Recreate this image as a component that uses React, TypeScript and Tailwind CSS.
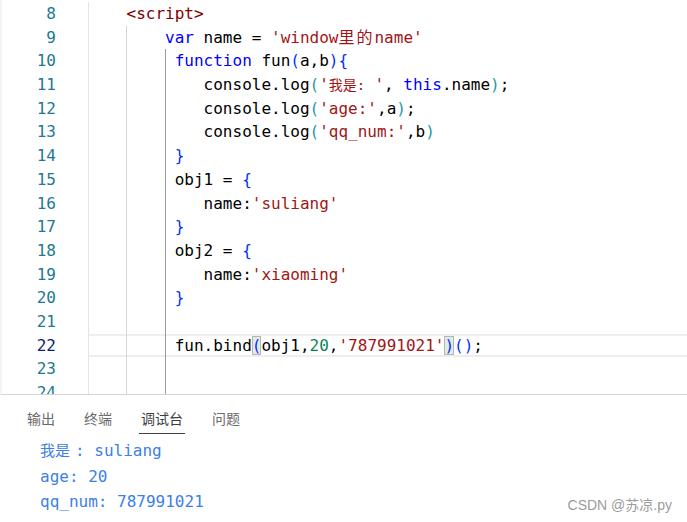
import React from "react";

type Tok = { t: string; c: string; cjk?: "big" | "small"; box?: boolean };

const K = "text-[#0000ff]";
const S = "text-[#a31515]";
const N = "text-[#098658]";
const T = "text-[#800000]";
const D = "text-black";
const B1 = "text-[#0431fa]";
const B2 = "text-[#1f9aa8]";

const tk = (t: string, c: string, extra: Partial<Tok> = {}): Tok => ({ t, c, ...extra });

const LINES: { n: number; indent: number; toks: Tok[] }[] = [
  { n: 8, indent: 4, toks: [tk("<script>", T)] },
  {
    n: 9,
    indent: 8,
    toks: [tk("var", K), tk(" name = ", D), tk("'window", S), tk("里的", S, { cjk: "big" }), tk("name'", S)],
  },
  {
    n: 10,
    indent: 9,
    toks: [tk("function", K), tk(" fun", D), tk("(", B1), tk("a,b", D), tk(")", B1), tk("{", B1)],
  },
  {
    n: 11,
    indent: 12,
    toks: [
      tk("console.log", D),
      tk("(", B2),
      tk("'", S),
      tk("我是:", S, { cjk: "small" }),
      tk("'", S),
      tk(", ", D),
      tk("this", K),
      tk(".name", D),
      tk(")", B2),
      tk(";", D),
    ],
  },
  {
    n: 12,
    indent: 12,
    toks: [tk("console.log", D), tk("(", B2), tk("'age:'", S), tk(",a", D), tk(")", B2), tk(";", D)],
  },
  {
    n: 13,
    indent: 12,
    toks: [tk("console.log", D), tk("(", B2), tk("'qq_num:'", S), tk(",b", D), tk(")", B2)],
  },
  { n: 14, indent: 9, toks: [tk("}", B1)] },
  { n: 15, indent: 9, toks: [tk("obj1 = ", D), tk("{", B1)] },
  { n: 16, indent: 12, toks: [tk("name:", D), tk("'suliang'", S)] },
  { n: 17, indent: 9, toks: [tk("}", B1)] },
  { n: 18, indent: 9, toks: [tk("obj2 = ", D), tk("{", B1)] },
  { n: 19, indent: 12, toks: [tk("name:", D), tk("'xiaoming'", S)] },
  { n: 20, indent: 9, toks: [tk("}", B1)] },
  { n: 21, indent: 0, toks: [] },
  {
    n: 22,
    indent: 9,
    toks: [
      tk("fun.bind", D),
      tk("(", B1, { box: true }),
      tk("obj1,", D),
      tk("20", N),
      tk(",", D),
      tk("'787991021'", S),
      tk(")", B1, { box: true }),
      tk("()", B1),
      tk(";", D),
    ],
  },
  { n: 23, indent: 0, toks: [] },
  { n: 24, indent: 0, toks: [] },
];

const mono = "font-[family-name:DejaVu_Sans_Mono,Noto_Sans_CJK_SC,monospace] text-[16px]";

const Token: React.FC<{ tok: Tok }> = ({ tok }) => {
  if (tok.cjk === "big") {
    return <span className={`${tok.c} tracking-[2px] text-[16px]`}>{tok.t}</span>;
  }
  if (tok.cjk === "small") {
    // narrow glyphs, wide advance
    return <span className={`${tok.c} inline-block w-[45.6px] text-[14px]`}>{tok.t}</span>;
  }
  if (tok.box) {
    return <span className={`${tok.c} bg-[#e2ebe4] shadow-[inset_0_0_0_1px_#b5b5b5]`}>{tok.t}</span>;
  }
  return <span className={tok.c}>{tok.t}</span>;
};

const App: React.FC = () => {
  return (
    <div className="relative w-[687px] h-[522px] overflow-hidden bg-white">
      {/* editor */}
      <div className="h-[395px] overflow-hidden border-b border-[#d4d4d4] pt-[2px] border-l-2 border-l-[#f3f3f3]">
        {LINES.map((line) => {
          const active = line.n === 22;
          return (
            <div key={line.n} className={`flex h-[23.7px] ${mono} leading-[23.7px]`}>
              <div className="w-[86px] flex shrink-0">
                <span
                  className={`w-[54px] text-right ${active ? "text-[#0b216f]" : "text-[#237893]"}`}
                >
                  {line.n}
                </span>
              </div>
              <div
                className={`relative flex-1 whitespace-pre ${
                  active ? "shadow-[inset_0_2px_0_#eeeeee,inset_0_-2px_0_#eeeeee]" : ""
                }`}
              >
                {/* indent guides */}
                <span className="absolute left-0 top-0 h-full w-px bg-[#e3e3e3]" />
                {line.n >= 9 && <span className="absolute left-[38px] top-0 h-full w-px bg-[#d6d6d6]" />}
                {line.n >= 10 && <span className="absolute left-[77px] top-0 h-full w-px bg-[#9a9a9a]" />}
                <span>{" ".repeat(line.indent)}</span>
                {line.toks.map((tok, i) => (
                  <Token key={i} tok={tok} />
                ))}
              </div>
            </div>
          );
        })}
      </div>

      {/* panel tabs */}
      <div className="flex pl-[25px] gap-[25px] font-[family-name:Noto_Sans_CJK_SC,sans-serif] text-[14px] leading-[20px]">
        <div className="px-[2px] pt-[13px] pb-[5px] text-[#6a6a6a]">输出</div>
        <div className="px-[2px] pt-[13px] pb-[5px] text-[#6a6a6a]">终端</div>
        <div className="px-[2px] pt-[13px] pb-[5px] text-[#3c3c3c] border-b border-[#424242]">调试台</div>
        <div className="px-[2px] pt-[13px] pb-[5px] text-[#6a6a6a]">问题</div>
      </div>

      {/* debug console output */}
      <div className={`pl-[40px] pt-[4px] ${mono} leading-[25px] text-[#3d7fe6] whitespace-pre`}>
        <div>
          <span className="inline-block w-[35px] text-[15px]">我是</span>: suliang
        </div>
        <div>age: 20</div>
        <div>qq_num: 787991021</div>
      </div>

      {/* watermark */}
      <div className="absolute right-[15px] top-[495px] font-[family-name:Liberation_Sans,Noto_Sans_CJK_SC,sans-serif] text-[14px] leading-[20px] text-[#9c9c9c]">
        CSDN @苏凉.py
      </div>
    </div>
  );
};

export default App;
